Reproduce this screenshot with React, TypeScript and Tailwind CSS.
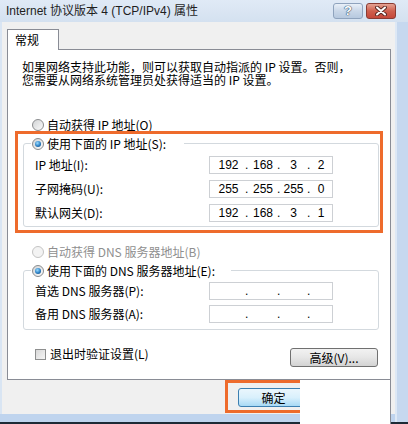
import React from "react"

function Radio({ checked, disabled }: { checked?: boolean; disabled?: boolean }) {
	return (
		<span
			className={`w-[12px] h-[12px] shrink-0 rounded-full border flex items-center justify-center ${
				disabled
					? "border-[#c4c4c4] bg-[#f3f3f3]"
					: "border-[#8a8c8e] bg-linear-to-br from-[#d2d4d6] to-[#fafafa]"
			}`}
		>
			{checked && (
				<span className="w-[6px] h-[6px] rounded-full bg-[radial-gradient(circle_at_40%_35%,#9bdcff,#2a7fc4_55%,#0d3b6b)]" />
			)}
		</span>
	)
}

function IpInput({ parts }: { parts?: string[] }) {
	const p = parts ?? ["", "", "", ""]
	return (
		<div className="w-[124px] h-[18px] border border-[#cdd0d4] bg-white grid grid-cols-[35px_4px_28px_3px_27px_3px_1fr] items-center text-[12px] leading-none text-black [font-family:'Liberation_Sans',sans-serif]">
			<span className="text-center pl-[2px]">{p[0]}</span>
			<span>.</span>
			<span className="text-center">{p[1]}</span>
			<span>.</span>
			<span className="text-center">{p[2]}</span>
			<span>.</span>
			<span className="text-center">{p[3]}</span>
		</div>
	)
}

function Row({ label, parts }: { label: string; parts?: string[] }) {
	return (
		<div className="flex items-center h-[18px] pl-[11px]">
			<span className="w-[174px] shrink-0">{label}</span>
			<IpInput parts={parts} />
		</div>
	)
}

function Group({ legend, children, legendPad }: { legend: string; children: React.ReactNode; legendPad: string }) {
	return (
		<fieldset className="w-[356px] border border-[#d3d9de] rounded-[3px]">
			<legend className={`ml-[7px] pl-[1px] ${legendPad} h-[13px] flex items-center gap-[3px]`}>
				<Radio checked />
				<span>{legend}</span>
			</legend>
			{children}
		</fieldset>
	)
}

export default function App() {
	return (
		<div className="w-[408px] h-[424px] overflow-hidden flex flex-col text-[12px] leading-[12px] text-black [font-family:'Noto_Sans_CJK_SC',sans-serif] bg-[#c6d8ef]">
			{/* title bar */}
			<div className="h-[22px] shrink-0 flex items-center bg-linear-to-b from-[#e0eaf6] to-[#d4e1f0] pl-[6px] pr-[12px]">
				<span className="text-[12px] [font-family:'Liberation_Sans','Noto_Sans_CJK_SC',sans-serif] text-[#1e1e1e]">
					Internet 协议版本 4 (TCP/IPv4) 属性
				</span>
				<div className="flex-1" />
				<div className="w-[30px] h-[16px] rounded-[3px] border border-[#8fa3bd] bg-linear-to-b from-[#e9f0f8] via-[#c9d7e8] to-[#b7c9df] flex items-center justify-center text-[13px] font-bold text-white [text-shadow:0_0_1px_#34506e,0_0_1px_#34506e,0_0_1px_#34506e] [font-family:'Liberation_Sans',sans-serif]">
					?
				</div>
				<div className="ml-[3px] w-[30px] h-[16px] rounded-[3px] border border-[#8a3b32] bg-linear-to-b from-[#e4a293] via-[#cf5f4d] to-[#c5483a] flex items-center justify-center">
					<svg width="12" height="10" viewBox="0 0 12 10">
						<path d="M2 1.5 L10 8.5 M10 1.5 L2 8.5" stroke="#5a2a24" strokeWidth="4" strokeLinecap="round" />
						<path d="M2 1.5 L10 8.5 M10 1.5 L2 8.5" stroke="#ffffff" strokeWidth="2" strokeLinecap="round" />
					</svg>
				</div>
			</div>

			<div className="flex flex-1">
				<div className="w-[395px] flex flex-col">
					{/* client area */}
					<div className="h-[358px] flex bg-[#f0f0f0] border-l-2 border-[#d9e5f3]">
						<div className="pl-[5px] pt-[7px] flex flex-col">
							<div className="relative z-10 -mb-px w-[52px] h-[21px] border border-b-0 border-[#898c95] bg-white pl-[7px] flex items-center">
								常规
							</div>
							<div className="w-[384px] h-[331px] border border-[#898c95] bg-white flex flex-col">
								<div className="pt-[10px] pl-[14px] leading-[13px]">
									<p>如果网络支持此功能，则可以获取自动指派的 IP 设置。否则，</p>
									<p>您需要从网络系统管理员处获得适当的 IP 设置。</p>
								</div>
								<div className="mt-[32px] ml-[24px] h-[13px] flex items-center gap-[3px]">
									<Radio />
									<span>自动获得 IP 地址(O)</span>
								</div>
								<div className="ml-[7px] w-[368px] border-[3px] border-[#ee6b2c] pt-[3px] pb-[3px] pl-[5px]">
									<Group legend="使用下面的 IP 地址(S):" legendPad="pr-[18px]">
										<div className="pt-[6px] pb-[4px] flex flex-col gap-[6px]">
											<Row label="IP 地址(I):" parts={["192", "168", "3", "2"]} />
											<Row label="子网掩码(U):" parts={["255", "255", "255", "0"]} />
											<Row label="默认网关(D):" parts={["192", "168", "3", "1"]} />
										</div>
									</Group>
								</div>
								<div className="mt-[12px] ml-[24px] h-[13px] flex items-center gap-[3px] text-[#8f8f8f]">
									<Radio disabled />
									<span>自动获得 DNS 服务器地址(B)</span>
								</div>
								<div className="mt-[6px] ml-[15px]">
									<Group legend="使用下面的 DNS 服务器地址(E):" legendPad="pr-[16px]">
										<div className="pt-[5px] pb-[6px] flex flex-col gap-[5px]">
											<Row label="首选 DNS 服务器(P):" />
											<Row label="备用 DNS 服务器(A):" />
										</div>
									</Group>
								</div>
								<div className="mt-[18px] flex items-start pl-[27px] pr-[12px]">
									<div className="flex items-center gap-[4px] h-[12px]">
										<span className="w-[11px] h-[11px] border border-[#8e8f8f] bg-linear-to-br from-[#d8d8d8] to-[#f6f6f6]" />
										<span>退出时验证设置(L)</span>
									</div>
									<div className="flex-1" />
									<div className="w-[88px] h-[19px] rounded-[3px] border border-[#707070] bg-linear-to-b from-[#f2f2f2] via-[#e6e6e6] to-[#d3d3d3] flex items-center justify-center">
										高级(V)...
									</div>
								</div>
							</div>
						</div>
						<div className="flex-1" />
					</div>

					{/* bottom strip */}
					<div className="h-[44px] flex">
						<div className="w-[300px] flex flex-col">
							<div className="h-[34px] bg-[#f0f0f0] border-l-2 border-[#d9e5f3] pl-[223px]">
								<div className="w-[75px] h-[33px] overflow-hidden border-[3px] border-r-0 border-[#ee6b2c] pt-[5px] pl-[10px]">
									<div className="w-[71px] h-[19px] rounded-[3px] border border-[#3c7fb1] bg-linear-to-b from-[#eaf6fd] via-[#d9f0fc] to-[#a7d9f5] flex items-center justify-center">
										确定
									</div>
								</div>
							</div>
							<div className="h-[8px] bg-[#bfd4ee]" />
							<div className="h-[2px] bg-[#1d2a36]" />
						</div>
						<div className="w-[91px] bg-white border-r border-[#898c95]" />
						<div className="flex-1 flex flex-col">
							<div className="h-[34px] bg-[#f0f0f0]" />
							<div className="h-[8px] bg-[#bfd4ee]" />
							<div className="h-[2px] bg-[#1d2a36]" />
						</div>
					</div>
				</div>
				<div className="flex-1 flex flex-col">
					<div className="flex-1 bg-[#c6d8ef] border-l-2 border-[#dde8f5]" />
					<div className="h-[2px] bg-[#1d2a36]" />
				</div>
			</div>
		</div>
	)
}
